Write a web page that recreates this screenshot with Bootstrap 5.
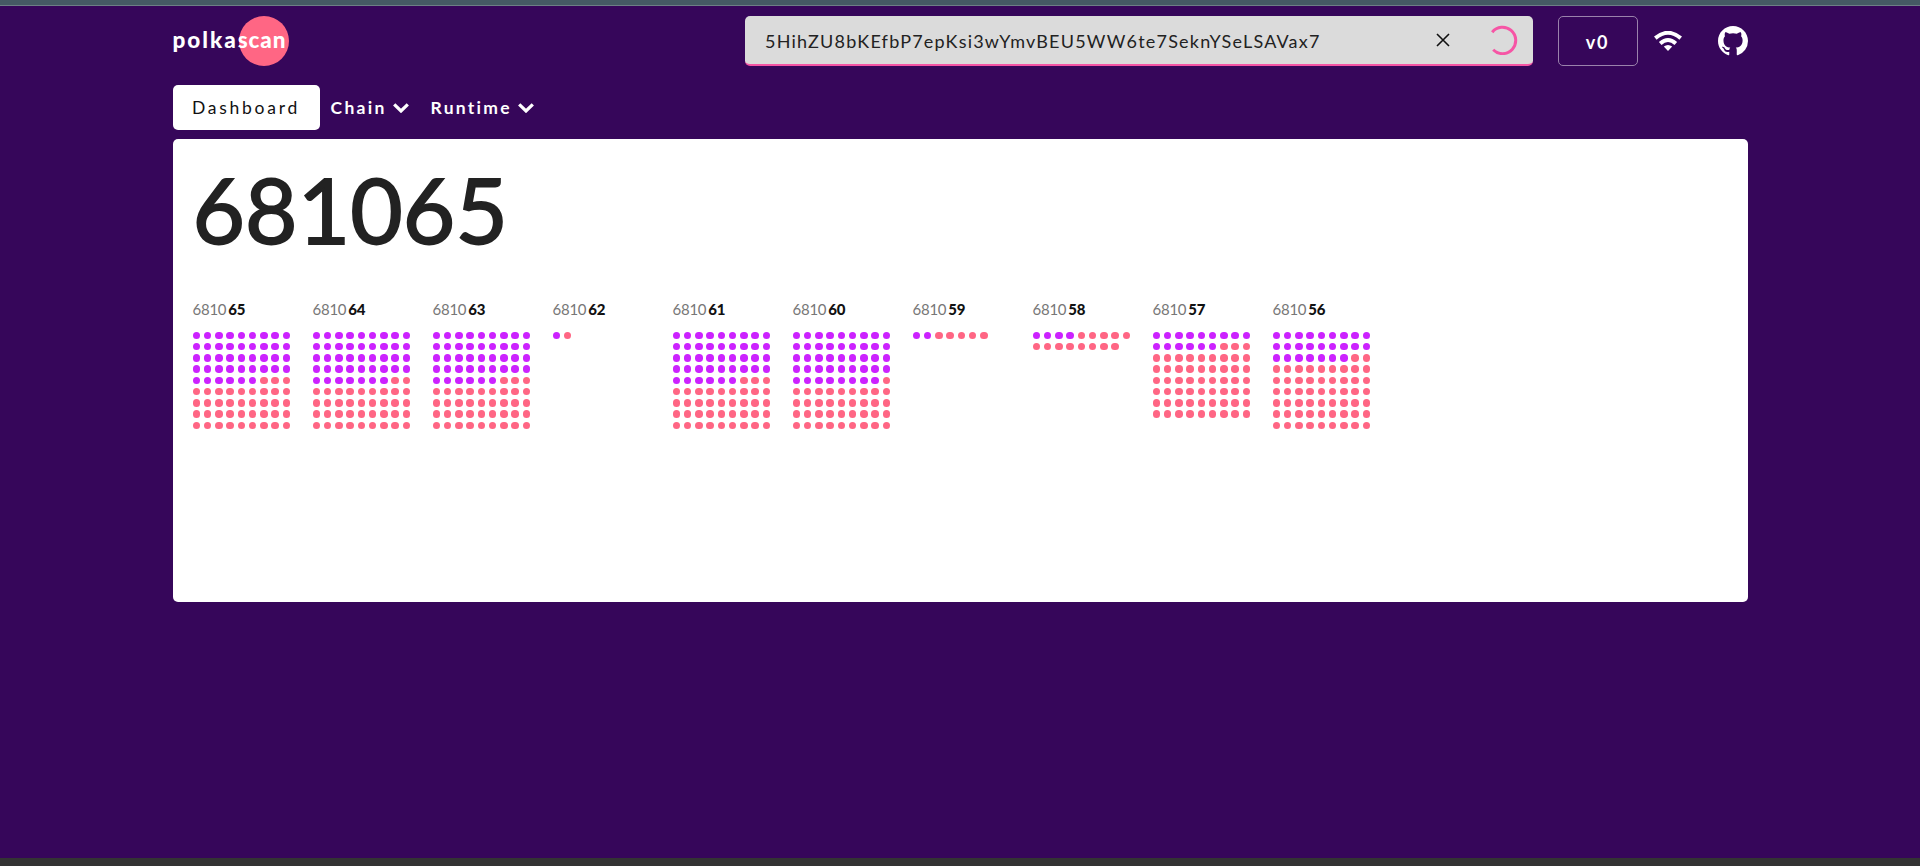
<!DOCTYPE html>
<html lang="en">
<head>
<meta charset="utf-8">
<meta name="viewport" content="width=device-width, initial-scale=1">
<title>Polkascan</title>
<link href="https://cdn.jsdelivr.net/npm/bootstrap@5.3.0/dist/css/bootstrap.min.css" rel="stylesheet">
<style>
body{height:866px;overflow:hidden;background:#36065a;font-family:Lato,"Open Sans",sans-serif;color:#222;line-height:1}
.top-strip{height:6px;background:#455a64;border-bottom:1px solid #6d7f86}
.bottom-strip{height:8px;background:#333}
.shell{width:1575px}
.masthead{height:50px;margin-top:10px}
.logo-wrap{width:117px;height:50px;color:#fff;font-weight:900;font-size:22.5px}
.logo-disc{position:absolute;right:1px;top:0;width:50px;height:50px;border-radius:50%;background:#ff6684}
.logo-word{position:absolute;left:0;top:13px;white-space:nowrap}
.logo-word .p1{letter-spacing:2px}.logo-word .p2{letter-spacing:.8px}
.search-box{width:788px;height:50px;background:#dbdbdb;border-bottom:2px solid #f655a5;border-radius:5px;padding:0 14.5px 0 20.5px}
.search-text{font-size:18px;letter-spacing:1.21px;white-space:nowrap;color:#222;padding-top:2px}
.version-btn{width:80px;height:50px;border:1px solid #9a82ac;border-radius:5px;color:#fff;font-size:18px;letter-spacing:1.8px;font-weight:700;margin-left:25px;padding-top:1px}
.wifi-icon{margin-left:16px}.git-icon{margin-left:36px}.spin-icon{margin-left:38.5px}
.tabs{height:45px;margin-top:19px;font-size:17.5px;color:#fff}
.tab-active{width:147px;height:45px;background:#fff;color:#111;border-radius:5px;letter-spacing:2.75px}
.tab-item{font-weight:700}
.tab-item.chain{width:100px;margin-left:11px;letter-spacing:2.3px}
.tab-item.runtime{width:119px;letter-spacing:2.25px}
.tab-item.chain svg{margin-right:22px}
.panel{height:463px;margin-top:9px;background:#fff;border-radius:5px;padding:0 20px}
.latest{font-size:90.5px;line-height:93px;letter-spacing:.1px;padding-top:24px;height:157px;-webkit-text-stroke:1.8px #222}
.block-col{width:120px}
.block-no{font-size:15px;line-height:18px;height:35.5px;padding-top:4px}
.block-no span{color:#777;letter-spacing:-.25px}.block-no b{color:#111;font-weight:900;margin-left:2px;letter-spacing:-.2px}
.dots{width:101.3px;gap:3.75px}
.dots i{width:7.5px;height:7.5px;border-radius:50%;background:#ff6684}
.dots i.ext{background:#cc22ff}
</style>
</head>
<body class="d-flex flex-column">
<div class="top-strip flex-shrink-0"></div>
<div class="shell mx-auto flex-grow-1">
  <header class="masthead d-flex align-items-center">
    <a class="logo-wrap position-relative text-decoration-none" href="#">
      <span class="logo-disc"></span>
      <span class="logo-word"><span class="p1">polka</span><span class="p2">scan</span></span>
    </a>
    <div class="search-box d-flex align-items-center ms-auto">
      <span class="search-text">5HihZU8bKEfbP7epKsi3wYmvBEU5WW6te7SeknYSeLSAVax7</span>
      <svg class="ms-auto" width="14" height="14" viewBox="0 0 14 14" fill="none" stroke="#111" stroke-width="1.6"><path d="M1 1l12 12M13 1L1 13"/></svg>
      <svg class="spin-icon" width="30" height="30" viewBox="0 0 30 30" fill="none" stroke="#f655a5" stroke-width="3"><path d="M4.2 7.2A13.2 13.2 0 1 1 5.2 24.8"/></svg>
    </div>
    <div class="version-btn d-flex align-items-center justify-content-center">v0</div>
    <svg class="wifi-icon" width="28" height="20" viewBox="0 0 28 20" fill="none" stroke="#fff" stroke-width="4"><path d="M1.3 7.1Q14-3.5 26.7 7.1"/><path d="M6.2 12.4Q14 5.6 21.8 12.4"/><path d="M14 20l-4.2-4.4Q14 12.4 18.2 15.6z" fill="#fff" stroke="none"/></svg>
    <svg class="git-icon" width="30" height="30" viewBox="0 0 16 16" fill="#fff"><path d="M8 0C3.58 0 0 3.58 0 8c0 3.54 2.29 6.53 5.47 7.59.4.07.55-.17.55-.38 0-.19-.01-.82-.01-1.49-2.01.37-2.53-.49-2.69-.94-.09-.23-.48-.94-.82-1.13-.28-.15-.68-.52-.01-.53.63-.01 1.08.58 1.23.82.72 1.21 1.87.87 2.33.66.07-.52.28-.87.51-1.07-1.78-.2-3.64-.89-3.64-3.95 0-.87.31-1.59.82-2.15-.08-.2-.36-1.02.08-2.12 0 0 .67-.21 2.2.82.64-.18 1.32-.27 2-.27s1.36.09 2 .27c1.53-1.04 2.2-.82 2.2-.82.44 1.1.16 1.92.08 2.12.51.56.82 1.27.82 2.15 0 3.07-1.87 3.75-3.65 3.95.29.25.54.73.54 1.48 0 1.07-.01 1.93-.01 2.2 0 .21.15.46.55.38A8.01 8.01 0 0 0 16 8c0-4.42-3.58-8-8-8z"/></svg>
  </header>
  <nav class="tabs d-flex align-items-center">
    <div class="tab-active d-flex align-items-center justify-content-center">Dashboard</div>
    <div class="tab-item chain d-flex align-items-center"><span>Chain</span><svg class="ms-auto" width="16" height="10" viewBox="0 0 16 10" fill="none" stroke="#fff" stroke-width="3.2"><path d="M1.2 1.3L8 8l6.8-6.7"/></svg></div>
    <div class="tab-item runtime d-flex align-items-center"><span>Runtime</span><svg class="ms-auto me-3" width="16" height="10" viewBox="0 0 16 10" fill="none" stroke="#fff" stroke-width="3.2"><path d="M1.2 1.3L8 8l6.8-6.7"/></svg></div>
  </nav>
  <main class="panel">
    <div class="latest">681065</div>
    <div class="d-flex" id="blocks"></div>
  </main>
</div>
<div class="bottom-strip flex-shrink-0"></div>
<script src="https://cdn.jsdelivr.net/npm/bootstrap@5.3.0/dist/js/bootstrap.bundle.min.js"></script>
<script>
// [last two digits, extrinsics, total dots]
const blocks=[[65,42,81],[64,43,81],[63,42,81],[62,1,2],[61,42,81],[60,44,81],[59,2,7],[58,4,17],[57,15,72],[56,25,81]];
document.getElementById('blocks').innerHTML=blocks.map(([n,e,t])=>
 `<div class="block-col"><div class="block-no"><span>6810</span><b>${n}</b></div><div class="dots d-flex flex-wrap">${Array.from({length:t},(_,i)=>`<i${i<e?' class="ext"':''}></i>`).join('')}</div></div>`).join('');
</script>
</body>
</html>
